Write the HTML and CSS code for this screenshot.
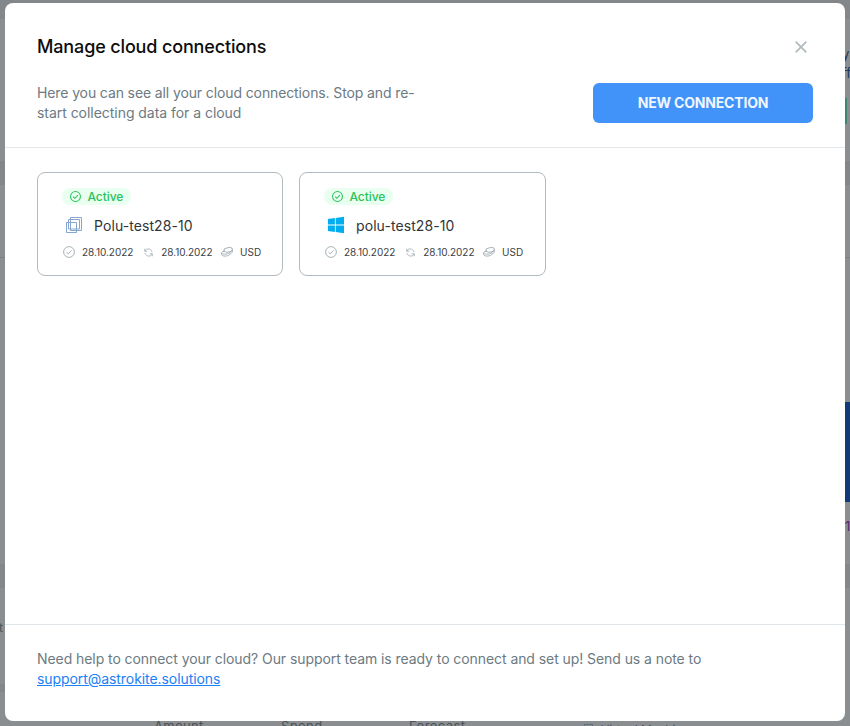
FILE: index.html
```html
<!DOCTYPE html>
<html lang="en">
<head>
<meta charset="utf-8">
<title>Manage cloud connections</title>
<link rel="stylesheet" href="styles.css">
</head>
<body>
<svg class="sprite" aria-hidden="true">
  <symbol id="check" viewBox="0 0 12 12"><circle cx="6" cy="6" r="5.4"/><path d="M3.500 6.200 5.300 7.900 8.600 4.400"/></symbol>
  <symbol id="sync" viewBox="0 0 10 10"><path d="M.8 .8V3.600H3.600M1 3.400C1.800 1.200 4.200.6 6 1.200S8.800 3.400 8.800 4.600M9.200 9.200V6.400H6.400M9 6.600C8.200 8.800 5.800 9.400 4 8.800S1.200 6.600 1.200 5.400"/></symbol>
  <symbol id="coins" viewBox="0 0 12 10"><ellipse cx="7.200" cy="2.900" rx="4.200" ry="2.200" transform="rotate(-8 7.200 2.900)"/><path d="M11.400 2.800V4.600C11.200 6 9.800 6.700 8.600 6.900M3 3.200V4.800M3 4.300C1.400 4.700.6 5.200.6 5.900 .6 7.300 4 7.500 6.600 6.800 8 6.400 8.700 6 8.800 5.200M.6 5.900V7.500C.9 9.200 4.100 9.500 6.800 8.700 8.200 8.300 8.800 7.600 8.800 6.600"/></symbol>
</svg>

<div class="backdrop">
  <span class="band band-top"></span>
  <span class="band band-upper"></span>
  <span class="band band-lower"></span>
  <span class="band band-bottom"></span>
  <span class="rule"></span>
  <span class="peek peek-y">y</span>
  <span class="peek peek-f">ff</span>
  <span class="green"></span>
  <span class="navy"></span>
  <span class="peek peek-one">1</span>
  <span class="peek peek-t">t</span>
  <span class="peek peek-amount">Amount</span>
  <span class="peek peek-spend">Spend</span>
  <span class="peek peek-forecast">Forecast</span>
  <span class="peek peek-virtual"><i class="box"></i>Virtual Machines</span>
</div>

<main class="dialog">
  <header class="head">
    <div class="title-row">
      <h1>Manage cloud connections</h1>
      <svg class="close" viewBox="0 0 12 12"><path d="M.7.7 11.300 11.300M11.300.7.7 11.300"/></svg>
    </div>
    <div class="intro-row">
      <p><span class="tight">Here you can see all your cloud connections. Stop and re-</span><br>start collecting data for a cloud</p>
      <button class="new">NEW CONNECTION</button>
    </div>
  </header>

  <section class="cards">
    <article class="card">
      <div class="badge"><svg><use href="#check"/></svg>Active</div>
      <div class="name">
        <svg class="logo vm" viewBox="0 0 18 18"><path d="M3.500 3.500h11v9.500h-11zM5.500 1.500h11v13h-11zM1.500 6.500h10v10h-10z"/></svg>
        <span>Polu-test28-10</span>
      </div>
      <div class="meta">
        <svg class="m-check"><use href="#check"/></svg><span class="m-date">28.10.2022</span>
        <svg class="m-sync"><use href="#sync"/></svg><span class="m-date">28.10.2022</span>
        <svg class="m-coins"><use href="#coins"/></svg><span>USD</span>
      </div>
    </article>
    <article class="card">
      <div class="badge"><svg><use href="#check"/></svg>Active</div>
      <div class="name">
        <svg class="logo win" viewBox="0 0 18 18"><path d="M.9 3.100 7.900 2.100V8.600H.9zM8.700 2 17 .8V8.600H8.700zM.9 9.400H7.900V15.900L.9 14.900zM8.700 9.400H17V17.200L8.700 16z"/></svg>
        <span>polu-test28-10</span>
      </div>
      <div class="meta">
        <svg class="m-check"><use href="#check"/></svg><span class="m-date">28.10.2022</span>
        <svg class="m-sync"><use href="#sync"/></svg><span class="m-date">28.10.2022</span>
        <svg class="m-coins"><use href="#coins"/></svg><span>USD</span>
      </div>
    </article>
  </section>

  <footer class="foot">
    Need help to connect your cloud? Our support team is ready to connect and set up! Send us a note to<br>
    <a href="mailto:support@astrokite.solutions">support@astrokite.solutions</a>
  </footer>
</main>
</body>
</html>
```
FILE: styles.css
```css
* { box-sizing: border-box; }

body {
  margin: 0;
  height: 726px;
  overflow: hidden;
  padding: 3px 5px 5px;
  background: #8a8e90;
  font-family: Inter, sans-serif;
  color: #6c7a82;
}

.sprite { position: absolute; width: 0; height: 0; }

svg { fill: none; stroke: currentColor; flex: none; }

/* Dimmed page visible around the dialog */
.backdrop { position: absolute; inset: 0; overflow: hidden; }
.backdrop > * { position: absolute; }
.band { left: 0; right: 0; height: 24px; background: #83878a; }
.band-top { top: 0; height: 19px; }
.band-upper { top: 161px; }
.band-lower { top: 564px; }
.band-bottom { top: 684px; height: 8px; right: 425px; }
.rule { top: 257px; left: 0; right: 0; height: 1px; background: #7b8083; }
.green { left: 845px; top: 98px; width: 2px; height: 26px; background: #3f8574; }
.navy { left: 845px; top: 402px; width: 5px; height: 100px; background: #123a78; }
.peek { font-size: 13px; line-height: 16px; color: #4a5359; white-space: nowrap; }
.peek-y { left: 842px; top: 46px; color: #1c365c; }
.peek-f { left: 842px; top: 65px; color: #1c365c; }
.peek-one { left: 845px; top: 518px; color: #5b2470; }
.peek-t { left: -1px; top: 620px; font-size: 12px; }
.peek-amount { left: 154px; top: 718px; letter-spacing: .3px; }
.peek-spend { left: 281px; top: 718px; letter-spacing: .4px; }
.peek-forecast { left: 409px; top: 718px; letter-spacing: .4px; }
.peek-virtual { left: 584px; top: 722px; font-size: 12px; display: flex; gap: 8px; }
.box { width: 9px; height: 10px; margin-top: 2px; border: 1px solid #5e7078; }

.dialog {
  position: relative;
  display: flex;
  flex-direction: column;
  height: 718px;
  border-radius: 8px;
  background: #fff;
}

.head { height: 145px; padding: 32px; border-bottom: 1px solid #e4e7e9; }
.title-row { display: flex; justify-content: space-between; align-items: center; height: 24px; }
h1 { margin: 0; font-size: 18px; font-weight: 500; line-height: 24px; letter-spacing: -.14px; color: #0c0c0d; }
.close { width: 12px; height: 12px; margin-right: 6px; color: #b0babf; stroke-width: 1.7; }
.intro-row { display: flex; justify-content: space-between; margin-top: 24px; }
p { margin: 0; font-size: 14px; line-height: 20px; letter-spacing: -.04px; }
.tight { letter-spacing: -.115px; }
.new {
  width: 220px;
  height: 40px;
  padding: 0;
  border: 0;
  border-radius: 6px;
  background: #4193f9;
  color: #f0f6ff;
  font: 700 14px/20px Inter, sans-serif;
  letter-spacing: -.17px;
}

.cards { flex: 1; display: flex; align-items: flex-start; gap: 16px; padding: 24px 32px; }
.card {
  width: 246px;
  height: 104px;
  padding: 15px 0 0 25px;
  border: 1px solid #b0babf;
  border-radius: 8px;
}
.card + .card { width: 247px; }
.badge {
  display: flex;
  align-items: center;
  gap: 6.5px;
  width: 69px;
  height: 17px;
  margin-left: -1px;
  padding-left: 8px;
  border-radius: 8px;
  background: #e9fff0;
  color: #28c35a;
  font-size: 12px;
  font-weight: 500;
  letter-spacing: -.05px;
}
.badge svg { width: 11px; height: 11px; stroke-width: 1.1; }
.name { display: flex; align-items: center; gap: 11px; height: 24px; margin: 8px 0 8px 2px; font-size: 14px; letter-spacing: .08px; color: #313437; }
.logo { width: 18px; height: 18px; }
.vm { color: #86a5cf; stroke-width: 1; }
.win { fill: #00adef; stroke: none; }
.meta { display: flex; align-items: center; height: 14px; font-size: 10px; color: #3d4144; }
.meta svg { color: #a6b2b9; stroke-width: 1; }
.m-check { width: 12px; height: 12px; margin-right: 7px; }
.m-sync { width: 9px; height: 9px; margin: 0 8.6px 0 10.300px; }
.m-coins { width: 12px; height: 10px; margin: 0 6.600px 0 9px; }
.m-date { letter-spacing: -.04px; }

.foot { height: 97px; padding: 24px 32px; border-top: 1px solid #e0e5ea; font-size: 14px; line-height: 20px; letter-spacing: -.07px; }
a { color: #1c80f6; }
```
